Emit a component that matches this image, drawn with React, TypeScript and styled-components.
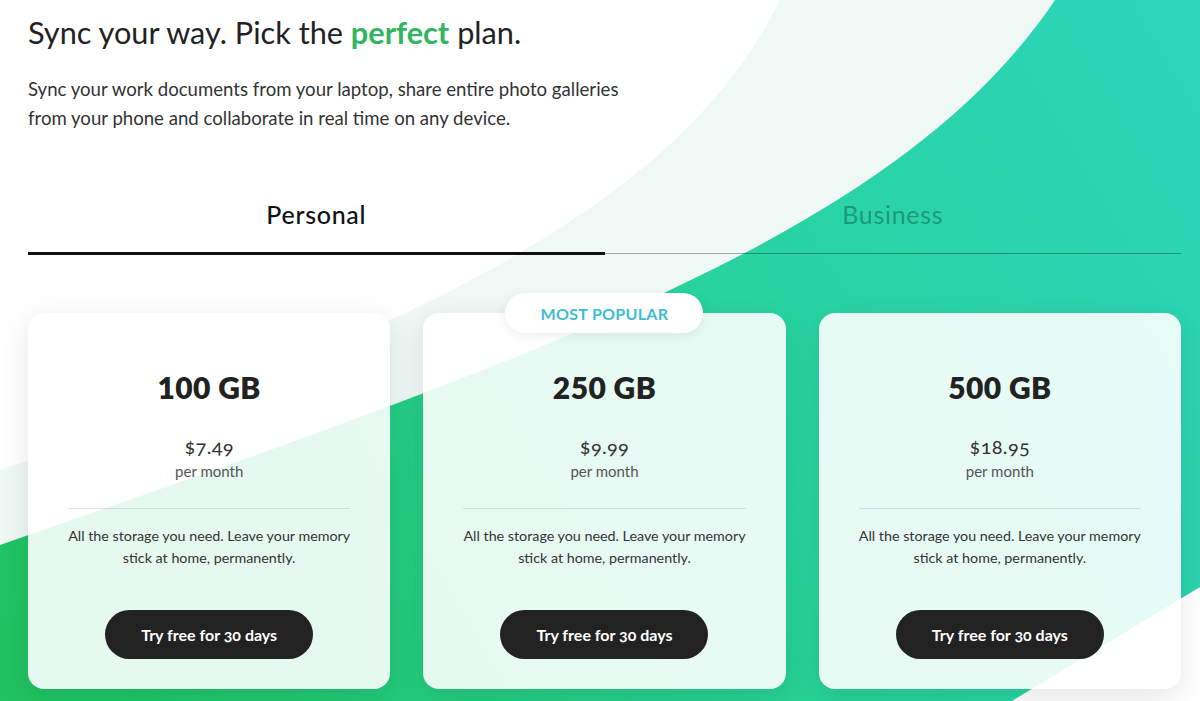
import React, { useState } from "react";
import styled, { createGlobalStyle } from "styled-components";

const GlobalStyle = createGlobalStyle`
  html, body { margin: 0; padding: 0; background: #ffffff; }
  body { font-family: Lato, "Open Sans", sans-serif; color: #222; }
  * { box-sizing: border-box; }
`;

const Page = styled.div`
  position: relative;
  width: 1200px;
  height: 701px;
  overflow: hidden;
  background: #ffffff;
`;

const Backdrop = styled.svg`
  position: absolute;
  inset: 0;
  width: 1200px;
  height: 701px;
  z-index: 0;
`;

const Content = styled.main`
  position: relative;
  z-index: 1;
  display: flex;
  flex-direction: column;
  padding: 15px 19px 0 28px;
`;

const Title = styled.h1`
  margin: 0;
  font-family: Lato, sans-serif;
  font-weight: 400;
  font-size: 30.7px;
  line-height: 36px;
  color: #222;
`;

const Accent = styled.span`
  color: #31b55f;
  font-weight: 700;
`;

const Lead = styled.p`
  margin: 24px 0 0;
  width: 620px;
  font-family: Lato, sans-serif;
  font-size: 18.6px;
  line-height: 29px;
  color: #333;
`;

const TabList = styled.div`
  margin-top: 67px;
  display: grid;
  grid-template-columns: 1fr 1fr;
  align-items: end;
`;

const Tab = styled.button<{ $active: boolean }>`
  appearance: none;
  background: transparent;
  border: none;
  border-bottom: ${(p) => (p.$active ? "3px solid #111" : "1px solid rgba(0,0,0,0.32)")};
  margin-bottom: ${(p) => (p.$active ? "0" : "1px")};
  padding: 0 0 ${(p) => (p.$active ? "24px" : "25px")};
  font-family: Lato, sans-serif;
  font-size: 25px;
  line-height: 28px;
  letter-spacing: 0.7px;
  font-weight: ${(p) => (p.$active ? 500 : 400)};
  color: ${(p) => (p.$active ? "#111" : "rgba(0,0,0,0.3)")};
  cursor: pointer;
  text-align: center;
`;

const Cards = styled.section`
  margin-top: 58px;
  display: grid;
  grid-template-columns: repeat(3, 1fr);
  gap: 33px;
`;

const Card = styled.article`
  position: relative;
  display: flex;
  flex-direction: column;
  align-items: center;
  padding: 56px 40px 30px;
  border-radius: 16px;
  background: rgba(255, 255, 255, 0.89);
  box-shadow: 0 8px 30px rgba(0, 0, 0, 0.1);
  text-align: center;
`;

const Badge = styled.div`
  position: absolute;
  top: -20px;
  left: 50%;
  transform: translateX(-50%);
  width: 198px;
  height: 40px;
  display: flex;
  align-items: center;
  justify-content: center;
  border-radius: 20px;
  background: #ffffff;
  box-shadow: 0 3px 12px rgba(0, 0, 0, 0.07);
  font-family: Lato, sans-serif;
  font-weight: 700;
  font-size: 16px;
  letter-spacing: 0.3px;
  color: #3dbdd3;
`;

const Size = styled.h2`
  margin: 0;
  font-family: Lato, sans-serif;
  font-weight: 800;
  font-size: 30px;
  line-height: 36px;
  color: #222;
  letter-spacing: 0.4px;
`;

const Price = styled.div`
  margin-top: 29px;
  font-family: Lato, sans-serif;
  font-size: 20px;
  line-height: 24px;
  color: #333;
  letter-spacing: 0.3px;
  font-variant-numeric: oldstyle-nums;
`;

const Period = styled.div`
  margin-top: 3px;
  font-family: Lato, sans-serif;
  font-size: 15px;
  line-height: 20px;
  color: #555;
`;

const Divider = styled.hr`
  align-self: stretch;
  margin: 27px 0 0;
  border: none;
  border-top: 1px solid rgba(0, 0, 0, 0.1);
`;

const Description = styled.p`
  margin: 16px -8px 0;
  font-family: Lato, sans-serif;
  font-size: 14.3px;
  line-height: 22px;
  color: #333;
`;

const CTA = styled.button`
  margin-top: 41px;
  width: 208px;
  height: 49px;
  border: none;
  border-radius: 25px;
  background: #222;
  color: #fff;
  font-family: Lato, sans-serif;
  font-weight: 700;
  font-size: 16px;
  font-variant-numeric: oldstyle-nums;
  cursor: pointer;
`;

const plans = [
  { size: "100 GB", price: "$7.49", popular: false },
  { size: "250 GB", price: "$9.99", popular: true },
  { size: "500 GB", price: "$18.95", popular: false },
];

export default function App() {
  const [tab, setTab] = useState<"personal" | "business">("personal");
  return (
    <Page>
      <GlobalStyle />
      <Backdrop viewBox="0 0 1200 701" aria-hidden="true">
        <defs>
          <linearGradient id="swoosh" x1="0" y1="701" x2="1200" y2="0" gradientUnits="userSpaceOnUse">
            <stop offset="0" stopColor="#1fc25f" />
            <stop offset="0.55" stopColor="#27d39b" />
            <stop offset="1" stopColor="#2dd5bb" />
          </linearGradient>
        </defs>
        <path d="M 780 0 C 700 160, 520 300, 0 470 L 0 701 L 1200 701 L 1200 0 Z" fill="#eff8f4" />
        <path d="M 1055 0 C 900 230, 560 350, 0 545 L 0 701 L 1200 701 L 1200 0 Z" fill="url(#swoosh)" />
        <path d="M 1012 701 L 1200 587 L 1200 701 Z" fill="#ffffff" />
      </Backdrop>
      <Content>
        <Title>
          Sync your way. Pick the <Accent>perfect</Accent> plan.
        </Title>
        <Lead>
          Sync your work documents from your laptop, share entire photo galleries from your phone and
          collaborate in real time on any device.
        </Lead>
        <TabList>
          <Tab $active={tab === "personal"} onClick={() => setTab("personal")}>
            Personal
          </Tab>
          <Tab $active={tab === "business"} onClick={() => setTab("business")}>
            Business
          </Tab>
        </TabList>
        <Cards>
          {plans.map((p) => (
            <Card key={p.size}>
              {p.popular && <Badge>MOST POPULAR</Badge>}
              <Size>{p.size}</Size>
              <Price>{p.price}</Price>
              <Period>per month</Period>
              <Divider />
              <Description>
                All the storage you need. Leave your memory stick at home, permanently.
              </Description>
              <CTA>Try free for 30 days</CTA>
            </Card>
          ))}
        </Cards>
      </Content>
    </Page>
  );
}
